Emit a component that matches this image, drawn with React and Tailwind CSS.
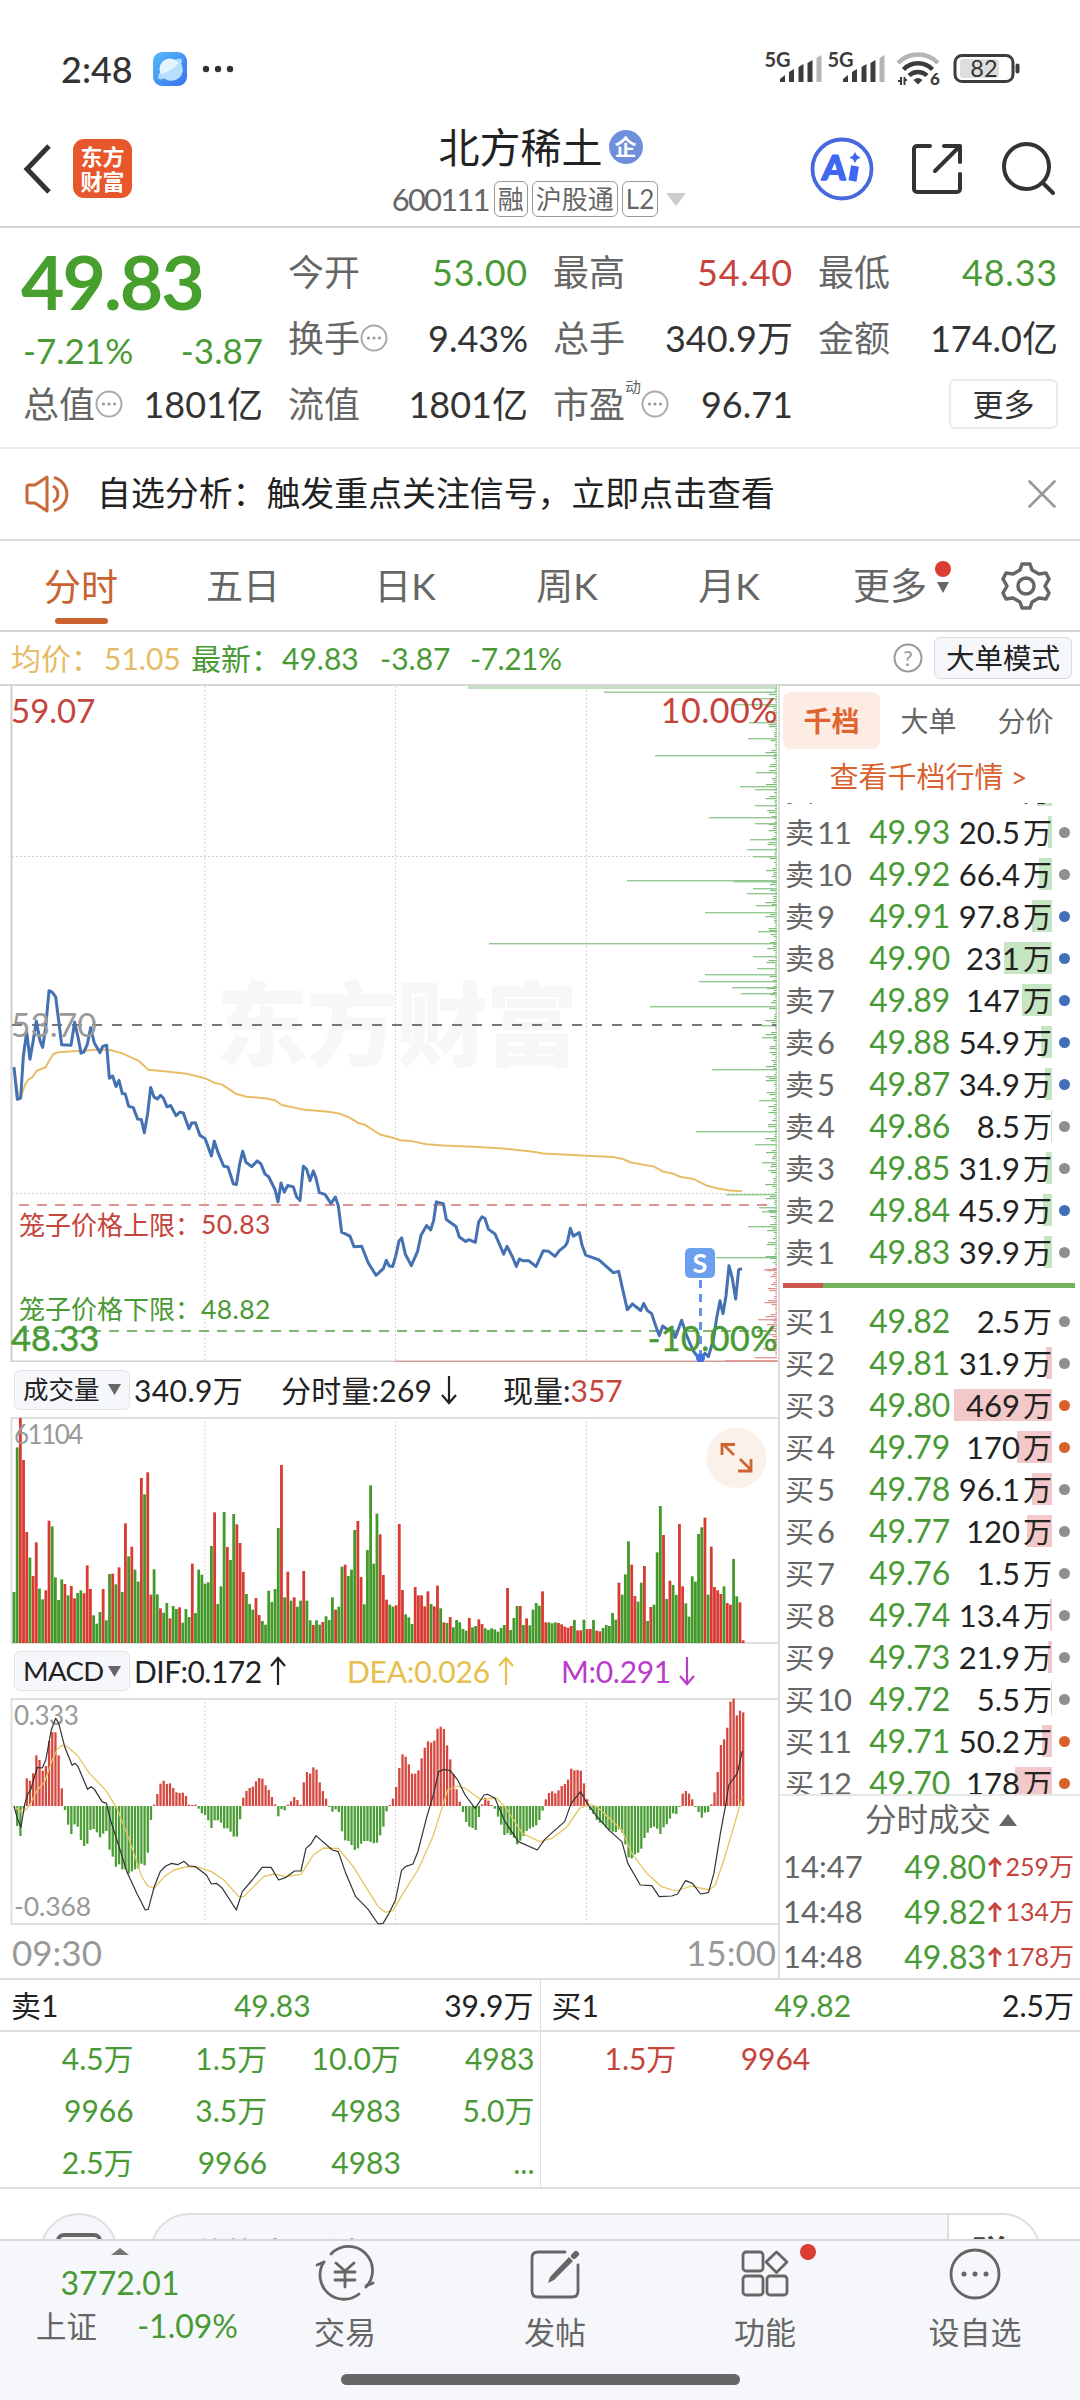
import React from 'react';
import { X } from 'lucide-react';

const GREEN = '#499a35';
const RED = '#c5443b';

const STATS = [
  { label: '今开', value: '53.00', tone: 'text-[#499a35] tracking-[.8px]' },
  { label: '最高', value: '54.40', tone: 'text-[#c5443b] tracking-[.8px]' },
  { label: '最低', value: '48.33', tone: 'text-[#499a35] tracking-[.8px]' },
  { label: '换手', value: '9.43%', info: true },
  { label: '总手', value: '340.9万' },
  { label: '金额', value: '174.0亿' },
];

const SELLS = [
  [12, '49.94', '72.6万', 15, 'gray'],
  [11, '49.93', '20.5万', 4, 'gray'],
  [10, '49.92', '66.4万', 13, 'gray'],
  [9, '49.91', '97.8万', 20, 'blue'],
  [8, '49.90', '231万', 48, 'blue'],
  [7, '49.89', '147万', 30, 'blue'],
  [6, '49.88', '54.9万', 11, 'blue'],
  [5, '49.87', '34.9万', 7, 'blue'],
  [4, '49.86', '8.5万', 1, 'gray'],
  [3, '49.85', '31.9万', 6, 'gray'],
  [2, '49.84', '45.9万', 9, 'blue'],
  [1, '49.83', '39.9万', 8, 'gray'],
];

const BUYS = [
  [1, '49.82', '2.5万', 0, 'gray'],
  [2, '49.81', '31.9万', 6, 'gray'],
  [3, '49.80', '469万', 98, 'orange'],
  [4, '49.79', '170万', 35, 'orange'],
  [5, '49.78', '96.1万', 20, 'gray'],
  [6, '49.77', '120万', 25, 'gray'],
  [7, '49.76', '1.5万', 0, 'gray'],
  [8, '49.74', '13.4万', 2, 'gray'],
  [9, '49.73', '21.9万', 4, 'gray'],
  [10, '49.72', '5.5万', 1, 'gray'],
  [11, '49.71', '50.2万', 10, 'orange'],
  [12, '49.70', '178万', 37, 'orange'],
];

const DOTS = { gray: 'bg-[#8e8e93]', blue: 'bg-[#3f6fb9]', orange: 'bg-[#d9622b]' };

const TRADES = [
  ['14:47', '49.80', '259万'],
  ['14:48', '49.82', '134万'],
  ['14:48', '49.83', '178万'],
];

const SELL_QUEUE = ['4.5万', '1.5万', '10.0万', '4983', '9966', '3.5万', '4983', '5.0万', '2.5万', '9966', '4983', '...'];
const BUY_QUEUE = ['1.5万', '9964'];

// price and average lines, split at the midday break
const PRICE_AM = '42,880 52,953 62,950 70,855 80,800 90,862 100,818 109,775 120,820 128,835 137,790 147,706 157,710 167,720 177,780 185,829 213,830 224,778 235,815 243,848 252,845 262,828 272,790 283,825 300,847 308,833 320,830 328,905 338,900 348,924 357,910 367,940 376,941 386,969 400,972 413,998 424,999 433,1029 443,985 452,926 462,948 472,952 482,944 490,950 501,970 512,967 528,990 540,982 550,984 567,1020 575,1007 586,1006 600,1035 615,1042 624,1060 634,1082 643,1048 655,1076 671,1105 684,1107 700,1145 709,1147 719,1100 728,1071 738,1096 755,1106 772,1093 783,1100 795,1123 806,1129 825,1158 834,1186 843,1143 853,1164 863,1149 880,1152 890,1175 900,1183 910,1105 920,1112 930,1138 940,1116 948,1132 958,1165 975,1169 993,1190 1006,1175 1015,1195 1025,1255 1050,1264 1062,1288 1085,1287 1105,1325 1128,1353 1150,1338 1159,1319 1168,1332 1178,1333 1187,1310';
const PRICE_PM = '47,1310 57,1275 65,1268 76,1305 94,1331 113,1298 123,1262 140,1240 152,1250 161,1228 169,1186 190,1190 199,1226 228,1242 238,1266 257,1276 267,1272 286,1278 296,1232 306,1220 315,1224 325,1248 345,1259 371,1305 381,1287 398,1312 409,1333 418,1316 430,1320 447,1320 468,1333 490,1297 505,1298 525,1310 538,1297 556,1286 562,1278 571,1246 580,1264 598,1256 606,1284 617,1307 657,1318 700,1347 716,1344 728,1385 742,1431 757,1418 782,1433 791,1417 802,1433 815,1440 828,1470 838,1490 848,1468 860,1475 875,1476 886,1494 905,1455 920,1490 940,1525 960,1545 975,1530 985,1538 1000,1500 1010,1450 1020,1411 1029,1440 1038,1400 1047,1331 1057,1360 1067,1407 1076,1340 1086,1338';
const AVG_AM = '42,882 55,945 62,948 75,920 85,908 97,903 110,888 137,880 148,865 160,850 175,846 300,840 330,841 365,848 415,865 445,886 500,890 560,895 615,905 645,916 665,919 710,941 740,947 800,951 825,955 845,966 910,976 985,981 1020,986 1050,995 1075,1007 1095,1011 1140,1033 1187,1042';
const AVG_PM = '47,1042 60,1046 95,1048 140,1055 190,1058 280,1061 370,1065 460,1072 490,1076 620,1081 700,1084 730,1089 750,1096 822,1106 848,1117 880,1122 900,1129 940,1134 980,1149 1010,1155 1050,1160 1086,1162';

// resting orders drawn from the right edge: [y, length]
const DEPTH = [
  [5.5, 173], [12, 24], [18, 42], [36, 28], [52, 29], [69, 122], [86, 21], [100, 37], [103, 22], [119, 22], [131, 68], [137, 22],
  [153, 27], [163, 30], [170, 24], [194, 150], [195, 43], [202, 24], [207, 30], [219, 21], [226, 72], [245, 19], [257, 288],
  [270, 24], [282, 20], [288, 72], [295, 78], [301, 45], [307, 36], [320, 127], [339, 15], [351, 15], [383, 65], [390, 11], [414, 18],
  [445, 81], [458, 22], [476, 15], [508, 51], [521, 18], [525, 15], [540, 29], [571, 61],
];
const DEPTH_RED = [[583, 13], [614, 9], [633, 19], [638, 10], [653, 9], [662, 14], [671, 22], [674, 52]];

const VOLUME = 'g153 g587 r675 r549 r333 g256 r201 r302 g163 g131 r158 r367 g350 g197 g129 g191 r177 g143 r171 r134 g150 g158 r149 r233 r162 g83 g58 g93 r162 g68 g207 r208 g176 r227 g153 r359 g260 r289 g220 g184 r495 g446 r512 r145 g221 g146 r104 g91 g120 r74 g111 g102 r107 g61 g102 g78 r238 g90 g220 g205 g178 g182 g291 r392 g117 g170 g393 r288 g249 g387 r356 r300 r213 g147 g117 g100 r135 r84 g66 g55 g157 g123 g162 g345 r534 g137 r214 g127 r137 g109 g127 r216 g127 g68 r54 g68 g55 r63 g80 g69 g137 r100 g109 g229 r235 g201 g220 g339 r366 r198 g116 g279 g473 g238 g388 r326 r204 r130 g115 g109 r113 r357 r159 g86 g77 g57 r168 r143 r143 r110 r155 g117 r110 r172 g104 r62 g60 r78 g47 g69 g62 g42 g37 r75 g47 g51 r71 r57 g44 g39 g44 g41 g34 g45 g54 r165 g39 g75 g111 r111 g54 r74 g53 g100 g120 g112 r155 r62 g62 g59 g62 r60 r56 r49 r46 r51 g69 r38 r38 g70 r42 r42 g69 r37 r35 g45 g54 g51 g90 g70 r181 g145 g206 g305 r235 r141 g124 g181 r231 g66 r108 g115 g272 g411 r324 g132 r187 g174 g144 r357 r170 g119 g79 g200 g184 g327 g347 r376 g145 r289 r168 r158 r147 g170 r120 r115 g252 g140 r122 r8'.split(' ');

const MACD = [
  0, -60, -90, -8, 83, 76, 98, 152, 138, 106, 120, 195, 222, 221, 152, 53, -12, -56, -84, -55, -62, -102, -120, -113, -72, -69, -79, -94, -83, -75,
  -131, -152, -182, -175, -190, -190, -203, -196, -190, -187, -173, -178, -140, -42, 4, 36, 67, 76, 66, 68, 54, 41, 39, 40, 30, 4, 3, 4, -8, -22,
  -27, -43, -66, -43, -43, -50, -67, -67, -77, -92, -92, -40, 25, 45, 54, 58, 74, 84, 82, 62, 48, 27, 5, -31, -9, -13, 4, 14, 27, 18,
  4, 71, 102, 97, 116, 109, 71, 45, 22, -3, -17, -10, -18, -76, -103, -105, -117, -132, -127, -113, -105, -105, -108, -112, -110, -88, -62, -16, 3, 22,
  57, 114, 155, 148, 125, 97, 97, 107, 143, 175, 194, 190, 196, 232, 238, 231, 182, 140, 96, 50, 13, -18, -48, -62, -66, -72, -33, 5, 25, 16,
  3, -8, -32, -56, -87, -82, -87, -95, -115, -104, -90, -75, -68, -63, -58, -42, -14, 20, 39, 44, 38, 47, 60, 66, 79, 112, 107, 108, 106, 68,
  20, -12, -24, -42, -50, -55, -65, -72, -77, -78, -70, -80, -115, -154, -157, -145, -140, -128, -96, -80, -66, -62, -68, -84, -64, -55, -38, -22, -24, -3,
  37, 45, 37, 20, -3, -18, -35, -20, -18, 5, 41, 102, 183, 200, 235, 313, 322, 272, 286, 281,
];
const DIF = '28,498 35,535 42,562 50,490 56,462 62,448 75,382 85,384 92,360 103,270 112,235 118,250 130,320 145,376 151,370 157,380 176,448 183,440 190,448 205,485 214,490 222,540 235,600 255,695 275,760 292,810 298,808 310,740 322,695 333,678 345,670 357,674 370,664 380,678 393,680 415,705 425,732 435,730 447,745 475,810 487,755 507,720 527,682 545,682 560,720 575,712 592,693 605,693 615,625 625,612 635,587 668,630 680,635 695,700 715,770 740,808 760,852 770,850 782,820 795,780 807,692 815,680 830,672 840,635 858,530 870,470 882,395 892,388 905,392 920,420 935,465 955,505 973,465 980,463 995,475 1015,545 1042,605 1080,630 1095,598 1112,575 1135,545 1148,490 1167,455 1180,490 1200,530 1225,572 1250,605 1262,670 1287,735 1310,737 1325,770 1350,768 1362,762 1378,722 1392,730 1408,762 1424,758 1435,700 1448,580 1458,500 1465,435 1482,400 1492,333';
const DEA = '28,498 45,520 60,495 75,450 90,425 105,360 115,328 125,316 135,320 155,345 180,400 213,452 235,505 260,600 285,710 297,738 310,745 330,710 350,690 375,680 400,682 425,695 450,720 480,770 490,770 530,710 550,702 575,710 605,703 630,645 650,624 680,625 710,680 760,800 775,817 790,812 810,760 840,690 870,590 900,450 920,438 935,445 965,478 998,474 1015,500 1050,580 1085,605 1110,595 1140,560 1165,505 1185,492 1200,500 1250,570 1270,640 1300,700 1330,740 1358,753 1390,738 1425,750 1438,735 1455,660 1475,560 1492,470';

function StatusBar() {
  return (
    <div className="flex h-[104px] items-center pt-[34px] pl-[61px] pr-[60px]">
      <span className="text-[36px] font-medium text-[#333]">2:48</span>
      <svg className="ml-[20px]" width="34" height="34" viewBox="0 0 34 34">
        <defs>
          <linearGradient id="sky" x1="0" y1="0" x2="1" y2="1">
            <stop offset="0" stopColor="#54bdf8" />
            <stop offset="1" stopColor="#3a6ff0" />
          </linearGradient>
        </defs>
        <rect width="34" height="34" rx="9" fill="url(#sky)" />
        <ellipse cx="17" cy="17" rx="15" ry="5" transform="rotate(-40 17 17)" fill="#a9dcff" />
        <circle cx="17" cy="17" r="10.5" fill="#e3f4ff" />
        <path d="M8 22 Q18 20 27 10 A10.5 10.5 0 0 1 10 25 Z" fill="#b7dfff" />
      </svg>
      <svg className="ml-[15px]" width="34" height="8" viewBox="0 0 34 8" fill="#333">
        <circle cx="4" cy="4" r="3.2" />
        <circle cx="16" cy="4" r="3.2" />
        <circle cx="28" cy="4" r="3.2" />
      </svg>
      <svg className="ml-auto" width="256" height="36" viewBox="764 52 256 36">
        {[0, 63].map((dx) => (
          <g key={dx} transform={`translate(${dx} 0)`} fill="#3c3c3c">
            <text x="764.500" y="68" fontSize="20" fontWeight="700" textLength="26">5G</text>
            <path d="M780 83v-3l5-4v7zM789 83v-10l5-3v13zM798.500 83v-15l5-3v18zM807.500 83v-19l5-3v22z" />
            <path d="M816.500 83v-24l5-3v27z" fill="#b5b5b5" />
          </g>
        ))}
        <g fill="none" strokeWidth="4.500">
          <path d="M898 64a28 28 0 0 1 40 0" stroke="#b5b5b5" />
          <path d="M903.500 70.500a20 20 0 0 1 29 0" stroke="#3c3c3c" />
          <path d="M909 76.500a13 13 0 0 1 18 0" stroke="#3c3c3c" />
        </g>
        <path d="M913.500 81q4.500-4 9 0l-4.500 4.500z" fill="#3c3c3c" />
        <path d="M898 82h3v-4M901 78v8M904.500 86v-8M907 81h-2.500" stroke="#3c3c3c" strokeWidth="2" fill="none" />
        <text x="930" y="86" fontSize="17" fontWeight="900" fill="#3c3c3c">6</text>
        <rect x="955" y="56.500" width="58" height="26" rx="7" fill="#fff" stroke="#3c3c3c" strokeWidth="3" />
        <rect x="960" y="60" width="39" height="19" rx="3" fill="#dedede" />
        <rect x="1015.500" y="64.500" width="4" height="10" rx="2" fill="#3c3c3c" />
        <text x="984" y="78" fontSize="23.500" textAnchor="middle" fill="#333">82</text>
      </svg>
    </div>
  );
}

function Tag({ children }) {
  return <span className="flex h-9 items-center rounded-[6px] border-[1.5px] border-[#999] px-[3px] text-[26px] text-[#666]">{children}</span>;
}

function Header() {
  return (
    <header className="flex h-[124px] items-start border-b-2 border-[#d6d6d6]">
      <div className="mt-[35px] flex w-[360px] items-center pl-[22px]">
        <svg width="30" height="50" viewBox="0 0 30 50" fill="none" stroke="#333" strokeWidth="5">
          <path d="M27 2 L5 25 L27 48" />
        </svg>
        <div className="ml-[21px] flex size-[59px] flex-col items-center justify-center rounded-[11px] bg-[#e8572b] text-[22px] leading-[25px] font-bold text-white">
          <span>东方</span>
          <span>财富</span>
        </div>
      </div>
      <div className="mt-[18px] flex w-[354px] flex-col items-center">
        <div className="flex h-[50px] items-center pl-[7px]">
          <span className="text-[41px] text-[#222]">北方稀土</span>
          <span className="ml-[6px] flex size-[34px] items-center justify-center rounded-full bg-[#6f8fdc] text-[22px] font-bold text-white">企</span>
        </div>
        <div className="mt-[9px] flex h-9 items-center gap-[4px] pl-[4px]">
          <span className="mr-[1px] text-[31px] tracking-[-1.8px] text-[#666]">600111</span>
          <Tag>融</Tag>
          <Tag>沪股通</Tag>
          <Tag>L2</Tag>
          <svg className="ml-[4px]" width="20" height="13" viewBox="0 0 20 13"><path d="M0 0h20l-10 13z" fill="#ccc" /></svg>
        </div>
      </div>
      <svg className="ml-[96px] mt-[33px]" width="250" height="66" viewBox="810 137 250 66" fill="none" stroke="#333" strokeWidth="4" strokeLinecap="round" strokeLinejoin="round">
        <circle cx="842" cy="169" r="29.500" stroke="#4868dd" strokeWidth="3.800" />
        <text x="822" y="180" fontSize="34" fontWeight="900" fill="#4067f2" stroke="#4067f2" strokeWidth="1.500" transform="skewX(-4) translate(12 0)">A</text>
        <path d="M855 166l-2.500 15" stroke="#4067f2" strokeWidth="8" strokeLinecap="butt" />
        <path d="M855 152l2 3.500 3.500 2-3.500 2-2 3.500-2-3.500-3.500-2 3.500-2z" fill="#4067f2" stroke="none" />
        <path d="M930 146H917a3 3 0 0 0-3 3v40a3 3 0 0 0 3 3h40a3 3 0 0 0 3-3v-15M944 146h16v16M960 146l-25 25" />
        <circle cx="1026.500" cy="166.500" r="22.500" />
        <path d="M1043 183l10 10" />
      </svg>
    </header>
  );
}

function InfoDot() {
  return (
    <svg className="shrink-0" width="28" height="28" viewBox="0 0 28 28">
      <circle cx="14" cy="14" r="12.500" fill="none" stroke="#aaa" strokeWidth="2" />
      <circle cx="8.500" cy="14" r="1.600" fill="#999" />
      <circle cx="14" cy="14" r="1.600" fill="#999" />
      <circle cx="19.500" cy="14" r="1.600" fill="#999" />
    </svg>
  );
}

function Stat({ label, value, info, sup, tone = 'text-[#333]' }) {
  return (
    <div className="flex h-[66px] items-center">
      <span className="text-[36px] text-[#666]">{label}</span>
      {sup && <span className="-mt-[34px] text-[16px] text-[#666]">{sup}</span>}
      {info && <InfoDot />}
      <span className={`ml-auto text-[36px] ${tone}`}>{value}</span>
    </div>
  );
}

function Quote() {
  return (
    <section className="h-[221px] border-b-2 border-[#ebebeb] pt-[11px] pr-[22px] pl-[23px]">
      <div className="flex gap-[25px]">
        <div className="h-[132px] w-[240px] text-[#499a35]">
          <div className="-ml-[2px] flex h-[84px] items-center text-[75px] font-bold tracking-[-2px] text-[#479f2e]">49.83</div>
          <div className="flex h-[54px] items-center justify-between text-[35px]">
            <span>-7.21%</span>
            <span>-3.87</span>
          </div>
        </div>
        <div className="grid flex-1 grid-cols-3 gap-x-[25px]">
          {STATS.map((s) => <Stat key={s.label} {...s} />)}
        </div>
      </div>
      <div className="grid grid-cols-4 gap-x-[25px]">
        <Stat label="总值" value="1801亿" info />
        <Stat label="流值" value="1801亿" />
        <Stat label="市盈" value="96.71" info sup="动" />
        <div className="flex h-[66px] items-center justify-end">
          <span className="flex h-[50px] w-[109px] items-center justify-center rounded-[6px] border-2 border-[#ebebeb] text-[31px] text-[#333]">更多</span>
        </div>
      </div>
    </section>
  );
}

function Notice() {
  return (
    <div className="flex h-[92px] items-center border-b-2 border-[#dcdcdc] pr-[13px] pl-[25px]">
      <svg width="46" height="38" viewBox="0 0 46 38" fill="none" stroke="#c9693a" strokeWidth="3" strokeLinejoin="round">
        <path d="M22 2v34L10 28H4q-2 0-2-2V12q0-2 2-2h6z" />
        <path d="M28 11a9 9 0 0 1 0 16M29 2.500a17 17 0 0 1 0 33" />
      </svg>
      <span className="ml-[26px] text-[33.9px] text-[#222]">自选分析：触发重点关注信号，立即点击查看</span>
      <X className="ml-auto size-[50px] text-[#999]" strokeWidth={1.3} />
    </div>
  );
}

function Tabs() {
  return (
    <nav className="flex h-[91px] items-center border-b-2 border-[#d6d6d6] text-[37px] text-[#666]">
      <div className="flex h-full w-[162px] flex-col items-center justify-end text-[#c8622f]">
        <span>分时</span>
        <span className="mt-[13px] mb-[6px] h-[6px] w-[53px] rounded-full bg-[#c8622f]" />
      </div>
      {['五日', '日K', '周K', '月K'].map((t) => (
        <div key={t} className="flex w-[162px] justify-center">{t}</div>
      ))}
      <div className="ml-[43px] flex items-center">
        更多
        <svg className="ml-[8px]" width="18" height="50" viewBox="0 0 18 50">
          <circle cx="8" cy="8" r="8" fill="#dc3d33" />
          <path d="M2 21h12l-6 11z" fill="#666" />
        </svg>
      </div>
      <svg className="ml-auto mr-[29px]" width="50" height="50" viewBox="-25 -25 50 50" fill="none" stroke="#666" strokeWidth="3.500" strokeLinejoin="round">
        <path d="M-4-22h8l2 6 7 4 7-1 3 6-4 7 4 7-3 6-7-1-7 4-2 6h-8l-2-6-7-4-7 1-3-6 4-7-4-7 3-6 7 1 7-4z" />
        <circle r="8" />
      </svg>
    </nav>
  );
}

function Ticker() {
  return (
    <div className="flex h-[54px] items-center border-b-2 border-[#d6d6d6] pr-[8px] pl-[11px] text-[30px] text-[#499a35]">
      <span className="w-[93px] text-[#e6bb66]">均价：</span>
      <span className="w-[87px] text-[#e6bb66]">51.05</span>
      <span className="w-[91px]">最新：</span>
      <span className="w-[98px]">49.83</span>
      <span className="w-[90px]">-3.87</span>
      <span className="tracking-[-.5px]">-7.21%</span>
      <svg className="ml-auto" width="30" height="30" viewBox="0 0 30 30">
        <circle cx="15" cy="15" r="13.500" fill="none" stroke="#999" strokeWidth="2" />
        <text x="15" y="22.500" fontSize="21" textAnchor="middle" fill="#999">?</text>
      </svg>
      <span className="ml-[11px] flex h-[42px] w-[138px] items-center justify-center rounded-[6px] border-[1.5px] border-[#d9dbe0] bg-[#f6f7fa] text-[28.5px] text-[#222]">大单模式</span>
    </div>
  );
}

function GridLines({ height }) {
  return (
    <g stroke="#d5d5d5" strokeWidth="1" strokeDasharray="2 2">
      <path d={`M205 0V${height}M395.500 0V${height}M586.500 0V${height}`} />
    </g>
  );
}

function PriceChart() {
  // short ticks filling the edge between the larger orders
  const ticks = Array.from({ length: 335 }, (_, i) => 1.5 + 11 * Math.pow(Math.abs(Math.sin(i * 12.9898) * Math.cos(i * 4.1)), 2));
  return (
    <svg className="block" width="778" height="676" viewBox="0 0 778 676">
      <text x="216" y="373" fontSize="92" fontWeight="900" fill="#f7f7f7" textLength="362">东方财富</text>
      <GridLines height={675} />
      <path d="M12 170.500H776M12 507.500H776" stroke="#d5d5d5" strokeDasharray="2 2" />
      <path d="M11.500 0V676M11 675.500H778" stroke="#d0d0d0" strokeWidth="2" fill="none" />
      <path d="M395 675.500H778" stroke="#d99b95" strokeWidth="1.500" />
      <rect x="468" y="0" width="309" height="3" fill="#c4dfc1" />
      {ticks.map((w, i) => (
        <rect key={i} x={777 - w} y={i * 2} width={w} height="1.200" fill={i < 290 ? '#7cbd78' : '#dd8f8c'} />
      ))}
      {DEPTH.map(([y, w]) => <rect key={y} x={777 - w} y={y} width={w} height="1.400" fill="#93c890" />)}
      {DEPTH_RED.map(([y, w]) => <rect key={y} x={777 - w} y={y} width={w} height="1.400" fill="#e29b98" />)}
      <path d="M12 339H776" stroke="#777" strokeWidth="1.800" strokeDasharray="10 10" />
      <path d="M19 519H768" stroke="#d5716c" strokeWidth="1.600" strokeDasharray="10 8" />
      <path d="M19 645H776" stroke="#569c47" strokeWidth="1.600" strokeDasharray="10 8" />
      <g transform="translate(0 -6) scale(.33333 .44)" fill="none" strokeLinejoin="round">
        <polyline points={AVG_AM} stroke="#e9bd68" strokeWidth="2" vectorEffect="non-scaling-stroke" />
        <polyline points={PRICE_AM} stroke="#4471b1" strokeWidth="3" vectorEffect="non-scaling-stroke" />
        <g transform="translate(1140 0)">
          <polyline points={AVG_PM} stroke="#e9bd68" strokeWidth="2" vectorEffect="non-scaling-stroke" />
          <polyline points={PRICE_PM} stroke="#4471b1" strokeWidth="3" vectorEffect="non-scaling-stroke" />
        </g>
      </g>
      <text x="11" y="37" fontSize="33" fill={RED}>59.07</text>
      <text x="778" y="37" fontSize="34" fill={RED} textAnchor="end" letterSpacing=".500">10.00%</text>
      <text x="11" y="351" fontSize="33.500" fill="#999">53.70</text>
      <text x="19" y="549" fontSize="26" fill={RED}>笼子价格上限：</text>
      <text x="201" y="548" fontSize="26.500" letterSpacing=".400" fill={RED}>50.83</text>
      <text x="19" y="633" fontSize="26" fill={GREEN}>笼子价格下限：</text>
      <text x="201" y="633" fontSize="26.500" letterSpacing=".400" fill={GREEN}>48.82</text>
      <text x="11" y="665" fontSize="34.500" fill={GREEN} stroke={GREEN} strokeWidth=".5">48.33</text>
      <text x="778" y="665" fontSize="34" fill={GREEN} stroke={GREEN} strokeWidth=".5" textAnchor="end" letterSpacing=".500">-10.00%</text>
      <path d="M700.500 594V670" stroke="#5f93ea" strokeWidth="3" strokeDasharray="8 6" />
      <circle cx="700.500" cy="672" r="4.500" fill="#3b73e6" />
      <rect x="685" y="562" width="30" height="30" rx="5" fill="#6ca0ef" />
      <text x="700" y="586.500" fontSize="27" fontWeight="700" fill="#fff" textAnchor="middle">S</text>
    </svg>
  );
}

function Arrow({ up }) {
  return (
    <svg className={up ? 'rotate-180' : ''} width="20" height="30" viewBox="0 0 20 30" fill="none" stroke="currentColor" strokeWidth="2.200">
      <path d="M10 1v27M3 20l7 8 7-8" />
    </svg>
  );
}

function Picker({ label }) {
  return (
    <span className="mr-[4px] flex h-[40px] w-[116px] items-center justify-between rounded-[6px] border-[1.5px] border-[#e0e2e6] bg-[#f6f7fa] pr-[8px] pl-[8px] whitespace-nowrap text-[#222]">
      {label}
      <svg width="13" height="11" viewBox="0 0 13 11"><path d="M0 0h13l-6.500 11z" fill="#666" /></svg>
    </span>
  );
}

function VolumeChart() {
  return (
    <svg className="block" width="778" height="227" viewBox="0 0 778 227">
      <GridLines height={226} />
      <path d="M778 1H11.500V226H778" fill="none" stroke="#dedede" strokeWidth="1.800" />
      {VOLUME.map((v, i) => {
        const h = Number(v.slice(1)) / 3;
        return <rect key={i} x={12.6 + i * 3.184} y={226 - h} width="2.800" height={h} fill={v[0] === 'r' ? '#d83b32' : '#439a2b'} />;
      })}
      <text x="14" y="27" fontSize="26" letterSpacing="-1.500" fill="#999">61104</text>
      <circle cx="736.500" cy="41" r="30" fill="#fbf1eb" />
      <path d="M734 38l-11-11M722 38V27.500H735M740 42l11 11M738 54h13V42" fill="none" stroke="#cf6430" strokeWidth="2.800" />
    </svg>
  );
}

function MacdChart() {
  return (
    <svg className="block" width="778" height="227" viewBox="0 0 778 227">
      <GridLines height={226} />
      <path d="M778 1H11.500V226H778" fill="none" stroke="#dedede" strokeWidth="1.800" />
      {MACD.map((v, i) => (
        <rect key={i} x={12.9 + i * 3.184} y={v > 0 ? 108 - v / 3 : 108} width="2.300" height={Math.abs(v) / 3} fill={v > 0 ? '#d54840' : '#4b9d35'} />
      ))}
      <text x="14" y="27" fontSize="26" letterSpacing="-.400" fill="#999">0.333</text>
      <text x="14" y="218" fontSize="26.500" letterSpacing="-.100" fill="#999">-0.368</text>
      <g transform="translate(0 -58) scale(.4975 .33333)" fill="none" strokeLinejoin="round">
        <polyline points={DEA} stroke="#e5c55c" strokeWidth="1.300" vectorEffect="non-scaling-stroke" />
        <polyline points={DIF} stroke="#333" strokeWidth="1.200" vectorEffect="non-scaling-stroke" />
      </g>
    </svg>
  );
}

function Charts() {
  return (
    <div className="w-[778px]">
      <PriceChart />
      <div className="flex h-[55px] items-center pl-[14px] text-[30px] text-[#222]">
        <span className="text-[25.5px]"><Picker label="成交量" /></span>
        <span className="w-[147px] tracking-[.4px]">340.9万</span>
        <span className="flex w-[222px] items-center gap-[7px] tracking-[.2px]">分时量:269<Arrow /></span>
        <span>现量:<span className="text-[#c5443b]">357</span></span>
      </div>
      <VolumeChart />
      <div className="flex h-[54px] items-center pl-[14px] text-[30px] text-[#222]">
        <span className="text-[27.5px] tracking-[-.6px]"><Picker label="MACD" /></span>
        <span className="flex w-[213px] items-center gap-[6px] tracking-[-.5px]">DIF:0.172<Arrow up /></span>
        <span className="flex w-[214px] items-center gap-[6px] tracking-[-.2px] text-[#e5c04e]">DEA:0.026<Arrow up /></span>
        <span className="flex items-center gap-[6px] tracking-[-.3px] text-[#b93ccb]">M:0.291<Arrow /></span>
      </div>
      <MacdChart />
      <div className="flex h-[54px] items-center justify-between pr-[2px] pl-[12px] text-[35px] text-[#999]">
        <span>09:30</span>
        <span>15:00</span>
      </div>
    </div>
  );
}

function Level({ side, row }) {
  const [n, price, qty, width, dot] = row;
  return (
    <div className="flex h-[42px] shrink-0 items-center pl-[5px]">
      <span className="w-[71px] text-[29px] whitespace-nowrap text-[#666]">{side}<span className="ml-[3px] text-[31px] tracking-[-1px]">{n}</span></span>
      <span className="w-[94px] text-right text-[32px] tracking-[-.2px] text-[#499a35]">{price}</span>
      <span className="relative flex h-8 w-[102px] items-center justify-end text-[31px] whitespace-nowrap text-[#222]">
        <span className={`absolute inset-y-0 right-0 ${side === '卖' ? 'bg-[#c6e5c2]' : 'bg-[#f2c9c8]'}`} style={{ width }} />
        <span className="relative flex items-center gap-[3px]">
          {qty.slice(0, -1)}
          <span className="text-[29px]">{qty.slice(-1)}</span>
        </span>
      </span>
      <span className={`ml-[7px] size-[11px] rounded-full ${DOTS[dot]}`} />
    </div>
  );
}

function OrderBook() {
  return (
    <aside className="flex h-[1293px] w-[302px] flex-col border-l-2 border-[#dcdcdc]">
      <div className="mt-[6px] flex h-[57px] pl-[3px] text-[28px] text-[#666]">
        <span className="flex w-[97px] items-center justify-center rounded-[8px] bg-[#fcece4] font-bold text-[#df6430]">千档</span>
        <span className="flex w-[97px] items-center justify-center">大单</span>
        <span className="flex w-[97px] items-center justify-center">分价</span>
      </div>
      <div className="flex h-[54px] items-center justify-center pr-[3px] text-[29px] text-[#d9622f]">查看千档行情&nbsp;&gt;</div>
      <div className="flex h-[470px] flex-col justify-end overflow-hidden">
        {SELLS.map((r) => <Level key={r[0]} side="卖" row={r} />)}
      </div>
      <div className="mt-[10px] mr-[5px] ml-[3px] flex h-[5px] shrink-0 bg-[#75b15b]">
        <span className="w-[40px] bg-[#cb5650]" />
      </div>
      <div className="mt-[12px] h-[496px] shrink-0 overflow-hidden border-b-2 border-[#e6e6e6]">
        {BUYS.map((r) => <Level key={r[0]} side="买" row={r} />)}
      </div>
      <div className="flex h-[48px] items-center justify-center gap-2 pl-[22px] text-[31.5px] text-[#666]">
        分时成交
        <svg width="18" height="12" viewBox="0 0 18 12"><path d="M0 12h18L9 0z" fill="#666" /></svg>
      </div>
      {TRADES.map(([time, price, qty]) => (
        <div key={time + price} className="flex h-[45px] items-center pr-[6px] pl-[3px]">
          <span className="text-[31px] text-[#666]">{time}</span>
          <span className="ml-auto text-[32px] text-[#499a35]">{price}</span>
          <svg className="mx-[2px]" width="14" height="20" viewBox="0 0 14 20" fill="none" stroke="#c5443b" strokeWidth="3"><path d="M7 20V2M1 8l6-6 6 6" /></svg>
          <span className="w-[70px] text-right text-[25px] whitespace-nowrap text-[#c5443b]">{qty}</span>
        </div>
      ))}
    </aside>
  );
}

function Queue({ side, price, qty, items, tone, pad }) {
  return (
    <div className="h-full w-1/2 text-[30px]">
      <div className="flex h-[52px] items-center justify-between border-b-2 border-[#dedede] pr-[6px] pl-[11px] text-[#222]">
        <span className="w-[120px]">{side}1</span>
        <span className="text-[#499a35]">{price}</span>
        <span className="w-[120px] text-right">{qty}</span>
      </div>
      <div className={`grid grid-cols-4 text-right ${pad} ${tone}`}>
        {items.map((q, i) => <span key={i} className="flex h-[52px] items-center justify-end">{q}</span>)}
      </div>
    </div>
  );
}

function BottomNav() {
  return (
    <nav className="h-[161px] border-t-2 border-[#d6d8dc] bg-[#f6f7fa] text-[#666]">
      <div className="flex h-[120px]">
        <div className="flex w-[240px] flex-col items-center pt-[7px]">
          <svg width="18" height="7" viewBox="0 0 18 7"><path d="M0 7h18L9 0z" fill="#777" /></svg>
          <span className="mt-[7px] flex h-[42px] items-center text-[32px] text-[#499a35]">3772.01</span>
          <span className="flex h-[44px] w-full items-center justify-between pr-[2px] pl-[36px] text-[30.5px]">上证<span className="text-[32px] text-[#499a35]">-1.09%</span></span>
        </div>
        <NavItem label="交易">
          <path d="M-14-20A24 24 0 0 1 21 13M14 20A24 24 0 0 1-21-12M-28-9l7-3M28 9l-7 3M21 13l1-2M-9-11l9 8 9-8M0-3v16M-10-2H10M-10 6H10" />
        </NavItem>
        <NavItem label="发帖">
          <path d="M10-22H-17q-6 0-6 6V17q0 6 6 6H17q6 0 6-6V-9" />
          <path d="M-7 9l2-6L14-17l4 4L-1 6z" fill="#666" stroke="none" />
          <path d="M19-18l2-2" strokeWidth="6" />
        </NavItem>
        <NavItem label="功能" dot>
          <rect x="-22" y="-22" width="20" height="19" rx="3" />
          <rect x="-22" y="2" width="20" height="19" rx="3" />
          <rect x="2" y="2" width="20" height="19" rx="3" />
          <path d="M11.500-22L22-12 11.500-1.500 1-12z" />
        </NavItem>
        <NavItem label="设自选">
          <circle r="24" />
          <path d="M-11 0h.01M0 0h.01M11 0h.01" strokeWidth="5" />
        </NavItem>
      </div>
      <div className="mx-auto mt-[13px] h-[11px] w-[399px] rounded-full bg-[#666867]" />
    </nav>
  );
}

function NavItem({ label, dot, children }) {
  return (
    <div className="relative flex w-[210px] flex-col items-center pt-[3px]">
      <svg width="60" height="60" viewBox="-30 -30 60 60" fill="none" stroke="#666" strokeWidth="2.800" strokeLinecap="round" strokeLinejoin="round">{children}</svg>
      <span className="mt-[6px] text-[31px] leading-[44px]">{label}</span>
      {dot && <span className="absolute top-[3px] right-[54px] size-4 rounded-full bg-[#dc3d33]" />}
    </div>
  );
}

export default function App() {
  return (
    <div className="flex h-[2400px] w-[1080px] flex-col overflow-hidden bg-white font-['Lato','Noto_Sans_CJK_SC',sans-serif] leading-none">
      <StatusBar />
      <Header />
      <Quote />
      <Notice />
      <Tabs />
      <Ticker />
      <div className="flex h-[1292px]">
        <Charts />
        <OrderBook />
      </div>
      <div className="flex h-[211px] border-y-2 border-[#dedede]">
        <Queue side="卖" price="49.83" qty="39.9万" items={SELL_QUEUE} tone="text-[#499a35]" pad="pr-[5px]" />
        <div className="w-px bg-[#dedede]" />
        <Queue side="买" price="49.82" qty="2.5万" items={BUY_QUEUE} tone="text-[#c5443b]" pad="pr-[2px] pl-[2px]" />
      </div>
      <div className="flex h-[50px] overflow-hidden pt-[24px] pl-[40px]">
        <div className="flex size-[78px] shrink-0 items-start justify-center rounded-full border-2 border-[#dcdee2] bg-[#f6f7fa] pt-[18px]">
          <span className="h-9 w-[46px] rounded-[8px] border-4 border-[#666]" />
        </div>
        <div className="ml-[32px] flex h-[78px] w-[891px] shrink-0 overflow-hidden rounded-full border-2 border-[#dcdee2] bg-[#f6f7fa]">
          <span className="w-[795px] pt-[22px] pl-[33px] text-[36px] text-[#999]">弹幕走一波</span>
          <span className="flex-1 border-l-2 border-[#dcdee2] bg-white pt-[20px] pl-[23px] text-[36px] font-bold text-[#444]">弹</span>
        </div>
      </div>
      <BottomNav />
    </div>
  );
}
